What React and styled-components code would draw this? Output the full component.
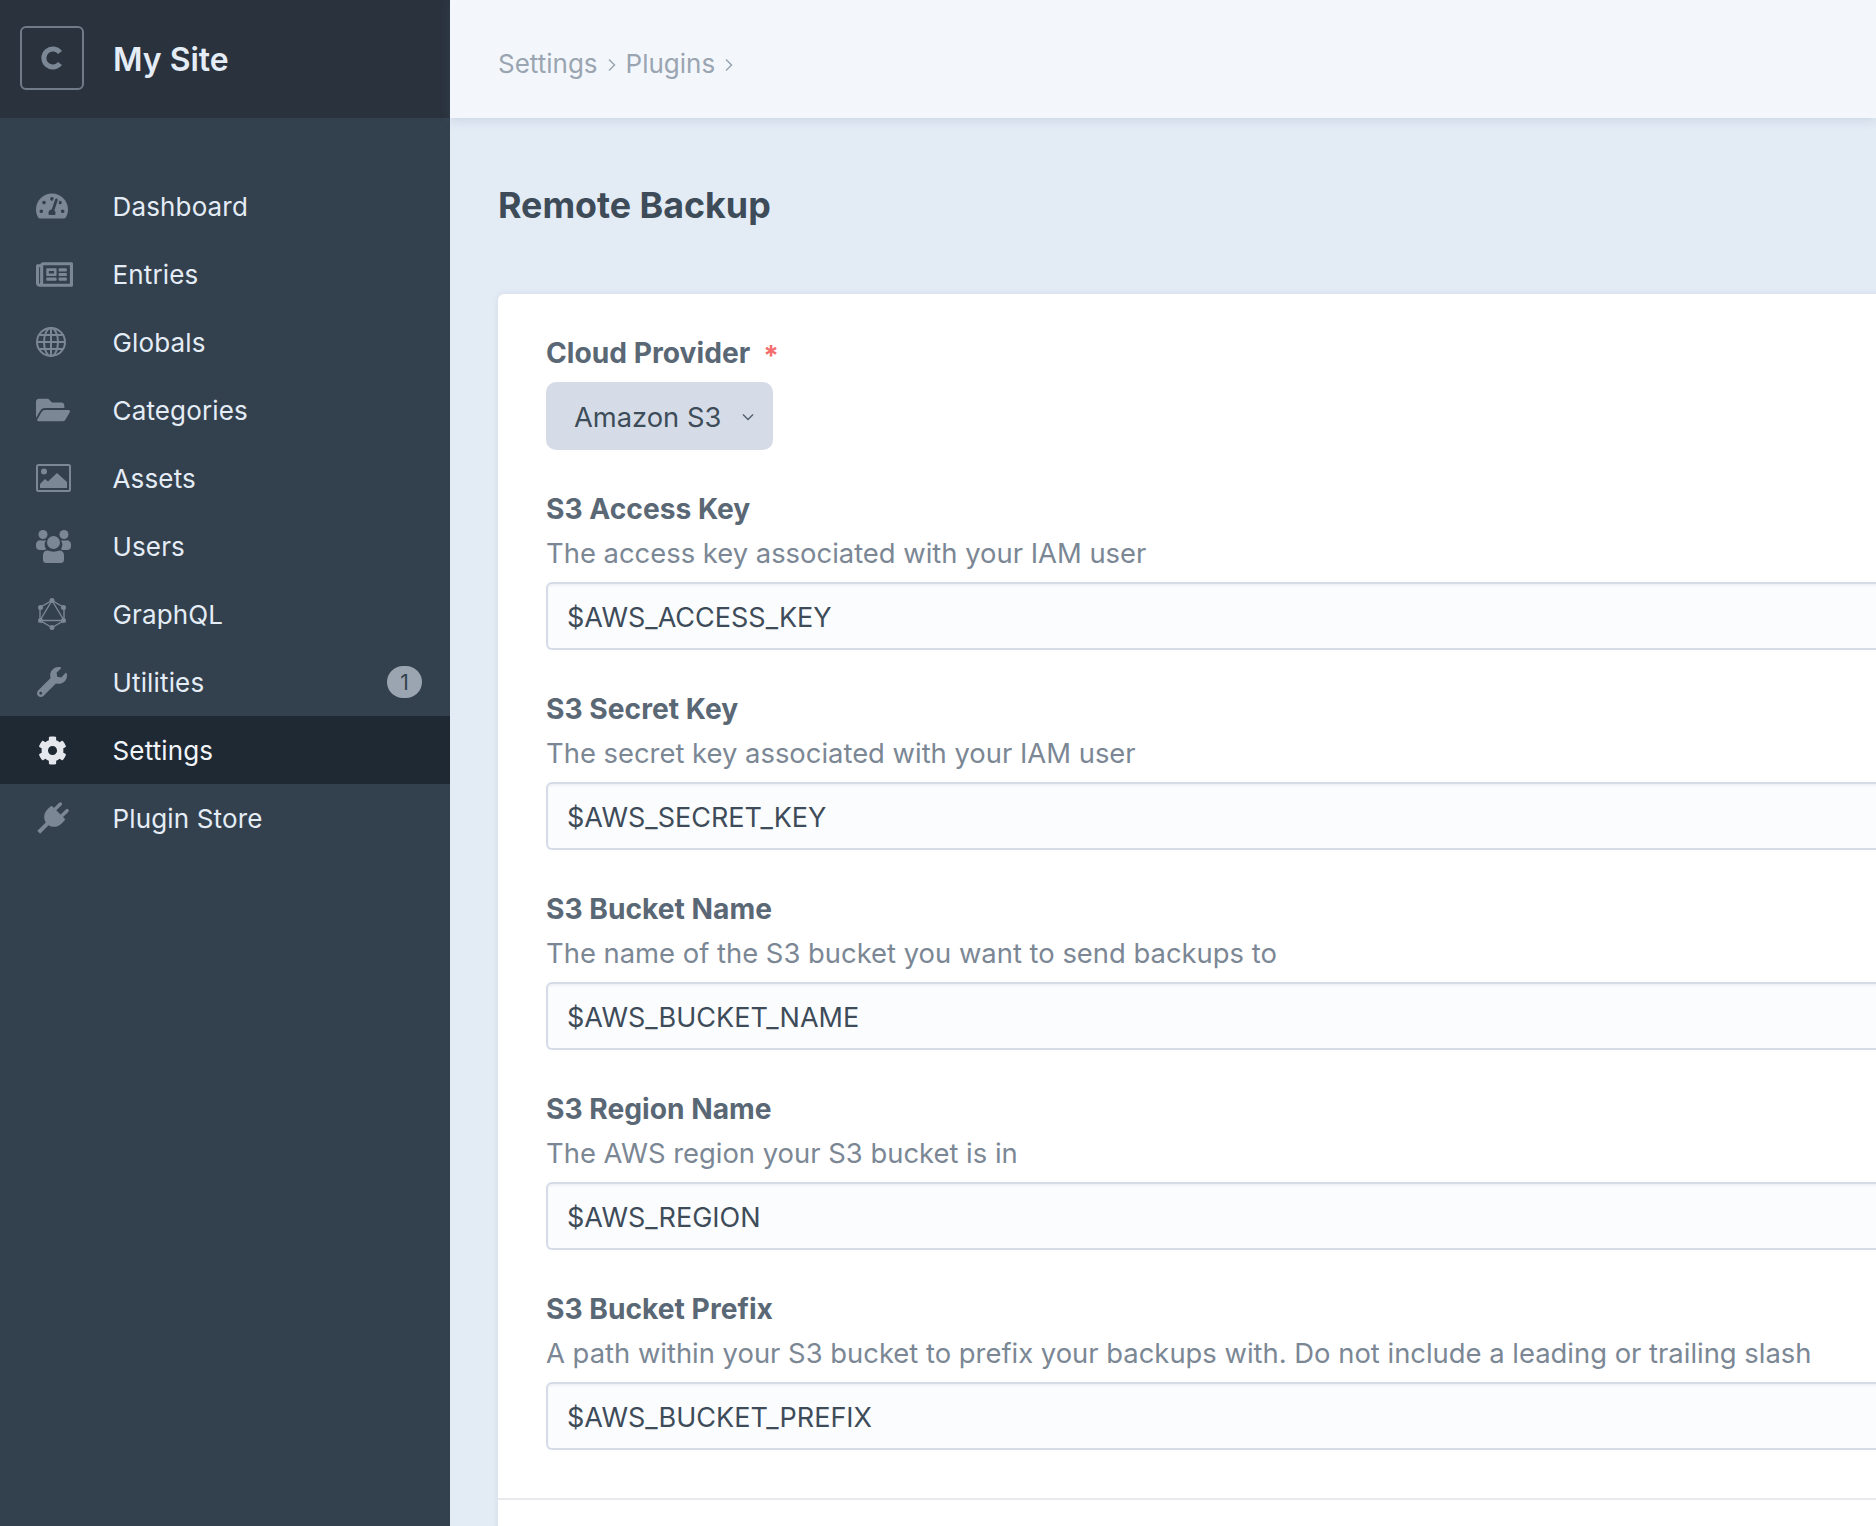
import React from 'react';
import styled, { createGlobalStyle } from 'styled-components';
import { FaTachometerAlt, FaRegNewspaper, FaFolderOpen, FaWrench, FaCog } from 'react-icons/fa';

const GlobalStyle = createGlobalStyle`
    html, body {
        margin: 0;
        padding: 0;
        background: #e3ebf5;
    }
    * {
        box-sizing: border-box;
    }
`;

const Page = styled.div`
    display: flex;
    width: 1876px;
    height: 1526px;
    overflow: hidden;
    font-family: Inter, 'Liberation Sans', sans-serif;
`;

const Sidebar = styled.aside`
    flex: 0 0 450px;
    background: #33404d;
`;

const SiteHeader = styled.div`
    display: flex;
    align-items: center;
    height: 118px;
    padding-left: 20px;
    background: #29323d;
`;

const LogoBox = styled.div`
    display: flex;
    align-items: center;
    justify-content: center;
    width: 64px;
    height: 64px;
    margin: 0 29px 2px 0;
    border: 2px solid #6f7b88;
    border-radius: 6px;
`;

const SiteName = styled.div`
    color: #e4ecf6;
    font-size: 32px;
    font-weight: 600;
`;

const Nav = styled.nav`
    padding-top: 54px;
`;

const NavRow = styled.div`
    display: flex;
    align-items: center;
    height: 68px;
    padding: 0 28px 0 36px;
    background: ${p => (p.$active ? '#1f2933' : 'transparent')};
    color: ${p => (p.$active ? '#f1f5fa' : '#e4ecf6')};
    font-size: 26px;
    letter-spacing: 0.15px;
`;

const NavIcon = styled.span`
    display: flex;
    flex: 0 0 76.5px;
    align-items: center;
    padding-left: ${p => p.$inset || 0}px;
    color: ${p => (p.$active ? '#e4e7eb' : '#7b8794')};
    svg {
        display: block;
    }
`;

const NavLabel = styled.span`
    flex: 1;
    padding-top: 1px;
`;

const Badge = styled.span`
    display: flex;
    align-items: center;
    justify-content: center;
    width: 35px;
    height: 32px;
    border-radius: 16px;
    background: #9aa5b1;
    color: #33404d;
    font-size: 21px;
`;

const Main = styled.main`
    flex: 1;
    min-width: 0;
`;

const TopBar = styled.div`
    position: relative;
    display: flex;
    align-items: center;
    height: 118px;
    padding: 8px 0 0 48px;
    background: #f3f7fc;
    box-shadow: 0 2px 10px rgba(100, 125, 155, 0.2);
    color: #9aa5b1;
    font-size: 26px;
`;

const Crumb = styled.span`
    margin-right: 10px;
`;

const CrumbArrow = styled.svg`
    width: 8px;
    height: 14px;
    margin: 4px 10px 0 0;
`;

const Content = styled.div`
    padding-left: 48px;
`;

const Title = styled.h1`
    display: flex;
    align-items: center;
    height: 176px;
    margin: 0;
    padding-bottom: 2px;
    color: #3e4c59;
    font-size: 35.8px;
    font-weight: 700;
`;

const Card = styled.section`
    width: 1500px;
    height: 1300px;
    padding-top: 39px;
    border-radius: 6px 0 0 0;
    background: #fff;
    box-shadow: 0 0 6px rgba(100, 125, 155, 0.14);
`;

const Fields = styled.div`
    padding: 0 0 48px 48px;
    border-bottom: 2px solid #e8eaee;
`;

const Field = styled.div`
    margin-bottom: 39px;
    &:last-child {
        margin-bottom: 0;
    }
`;

const Label = styled.div`
    display: flex;
    align-items: center;
    height: ${p => (p.$first ? '49px' : '40px')};
    padding-bottom: ${p => (p.$first ? '9px' : '0')};
    color: #5a6775;
    font-size: 28.2px;
    font-weight: 700;
`;

const Required = styled.span`
    margin: 6px 0 0 13px;
    color: #f56c6c;
    font-size: 28px;
    font-weight: 700;
    line-height: 1;
`;

const Hint = styled.div`
    height: 48px;
    margin-bottom: 5px;
    color: #7b8794;
    font-size: 27.4px;
    line-height: 48.500px;
`;

const Select = styled.div`
    display: flex;
    align-items: center;
    width: 227px;
    height: 68px;
    padding: 2px 0 0 28px;
    border-radius: 10px;
    background: #d5dce7;
    color: #3e4c59;
    font-size: 27.3px;
`;

const Chevron = styled.svg`
    width: 12px;
    height: 8px;
    margin-left: 21px;
`;

const Input = styled.div`
    display: flex;
    align-items: center;
    height: 68px;
    padding: 2px 0 0 19px;
    border: 2px solid #d5dce7;
    border-right: 0;
    border-radius: 6px 0 0 6px;
    background: #fbfcfe;
    box-shadow: inset 0 2px 2px rgba(150, 165, 190, 0.12);
    color: #3e4c59;
    font-size: 27px;
`;

const GlobeIcon = () => (
    <svg width="30" height="30" viewBox="0 0 30 30" fill="none" stroke="currentColor" strokeWidth="2">
        <circle cx="15" cy="15" r="14" />
        <ellipse cx="15" cy="15" rx="7" ry="14" />
        <path d="M15 1v28M1 15h28M3.500 8h23M3.500 22h23" />
    </svg>
);

const ImageIcon = () => (
    <svg width="35" height="28" viewBox="0 0 35 28" fill="currentColor">
        <rect x="1" y="1" width="33" height="26" rx="1.500" fill="none" stroke="currentColor" strokeWidth="2" />
        <circle cx="8" cy="7.500" r="3" />
        <path d="M4 24v-4l5-5 3 2.500 9-8.500 10 9v6z" />
    </svg>
);

const UsersIcon = () => (
    <svg width="35" height="33" viewBox="0 0 35 33" fill="currentColor">
        <circle cx="7" cy="4.500" r="4.500" />
        <circle cx="28" cy="4.500" r="4.500" />
        <path d="M5 10.500h5a8 8 0 0 0 0 8.500l-1 1H4a4 4 0 0 1-4-4v-1.500a4 4 0 0 1 5-4zM25 10.500h5a4 4 0 0 1 5 4V16a4 4 0 0 1-4 4h-5l-1-1a8 8 0 0 0 0-8.500z" />
        <circle cx="17.500" cy="12.500" r="6.500" />
        <path d="M11.500 20.500c3.500 1.500 8.500 1.500 12 0 2.500 0 4.500 2 4.500 4.500v4.500a3.500 3.500 0 0 1-3.500 3.500h-14a3.500 3.500 0 0 1-3.500-3.500V25c0-2.500 2-4.500 4.500-4.500z" />
    </svg>
);

const GraphqlIcon = () => (
    <svg width="28" height="32" viewBox="0 0 28 32" fill="none" stroke="currentColor" strokeWidth="1.400">
        <path d="M14 2.500L26 9.500V22.500L14 29.500L2 22.500V9.500Z" />
        <path d="M14 2.500L26 22.500H2Z" />
        <g fill="currentColor" stroke="none">
            <circle cx="14" cy="2.500" r="2.500" />
            <circle cx="25.500" cy="9.500" r="2.500" />
            <circle cx="25.500" cy="22.500" r="2.500" />
            <circle cx="14" cy="29.500" r="2.500" />
            <circle cx="2.500" cy="22.500" r="2.500" />
            <circle cx="2.500" cy="9.500" r="2.500" />
        </g>
    </svg>
);

const PlugIcon = () => (
    <svg width="33" height="33" viewBox="0 0 33 33" fill="currentColor">
        <g transform="rotate(45 16.500 16.500)">
            <rect x="10" y="-1" width="3.500" height="10" rx="1.700" />
            <rect x="19.500" y="-1" width="3.500" height="10" rx="1.700" />
            <path d="M6.500 9.500a1.500 1.500 0 0 1 1.500-1.500h17a1.500 1.500 0 0 1 1.500 1.500v4c0 5.500-3.500 9.500-8 10.500v12h-4v-12c-4.500-1-8-5-8-10.500z" />
        </g>
    </svg>
);

const navItems = [
    { label: 'Dashboard', icon: <FaTachometerAlt size={32} /> },
    { label: 'Entries', icon: <FaRegNewspaper size={37} /> },
    { label: 'Globals', icon: <GlobeIcon /> },
    { label: 'Categories', icon: <FaFolderOpen size={34} /> },
    { label: 'Assets', icon: <ImageIcon /> },
    { label: 'Users', icon: <UsersIcon /> },
    { label: 'GraphQL', icon: <GraphqlIcon />, inset: 2 },
    { label: 'Utilities', icon: <FaWrench size={30} />, badge: 1, inset: 1 },
    { label: 'Settings', icon: <FaCog size={29} />, active: true, inset: 2 },
    { label: 'Plugin Store', icon: <PlugIcon /> },
];

const fields = [
    { label: 'S3 Access Key', hint: 'The access key associated with your IAM user', value: '$AWS_ACCESS_KEY' },
    { label: 'S3 Secret Key', hint: 'The secret key associated with your IAM user', value: '$AWS_SECRET_KEY' },
    { label: 'S3 Bucket Name', hint: 'The name of the S3 bucket you want to send backups to', value: '$AWS_BUCKET_NAME' },
    { label: 'S3 Region Name', hint: 'The AWS region your S3 bucket is in', value: '$AWS_REGION' },
    {
        label: 'S3 Bucket Prefix',
        hint: 'A path within your S3 bucket to prefix your backups with. Do not include a leading or trailing slash',
        value: '$AWS_BUCKET_PREFIX',
    },
];

const Arrow = () => (
    <CrumbArrow viewBox="0 0 8 14" fill="none" stroke="#9aa5b1" strokeWidth="1.500">
        <path d="M1 1.500L6.500 7L1 12.500" />
    </CrumbArrow>
);

const App = () => (
    <Page>
        <GlobalStyle />
        <Sidebar>
            <SiteHeader>
                <LogoBox>
                    <svg width="24" height="24" viewBox="0 0 24 24" fill="none" stroke="#7b8794" strokeWidth="5">
                        <path d="M20 6.500A9 9 0 1 0 20 17.500" />
                    </svg>
                </LogoBox>
                <SiteName>My Site</SiteName>
            </SiteHeader>
            <Nav>
                {navItems.map(item => (
                    <NavRow key={item.label} $active={item.active}>
                        <NavIcon $active={item.active} $inset={item.inset}>{item.icon}</NavIcon>
                        <NavLabel>{item.label}</NavLabel>
                        {item.badge && <Badge>{item.badge}</Badge>}
                    </NavRow>
                ))}
            </Nav>
        </Sidebar>
        <Main>
            <TopBar>
                <Crumb>Settings</Crumb>
                <Arrow />
                <Crumb>Plugins</Crumb>
                <Arrow />
            </TopBar>
            <Content>
                <Title>Remote Backup</Title>
                <Card>
                    <Fields>
                        <Field>
                            <Label $first>
                                Cloud Provider
                                <Required>*</Required>
                            </Label>
                            <Select>
                                Amazon S3
                                <Chevron viewBox="0 0 12 8" fill="none" stroke="#52606d" strokeWidth="1.500">
                                    <path d="M1 1.500L6 6.500L11 1.500" />
                                </Chevron>
                            </Select>
                        </Field>
                        {fields.map(field => (
                            <Field key={field.label}>
                                <Label>{field.label}</Label>
                                <Hint>{field.hint}</Hint>
                                <Input>{field.value}</Input>
                            </Field>
                        ))}
                    </Fields>
                </Card>
            </Content>
        </Main>
    </Page>
);

export default App;
